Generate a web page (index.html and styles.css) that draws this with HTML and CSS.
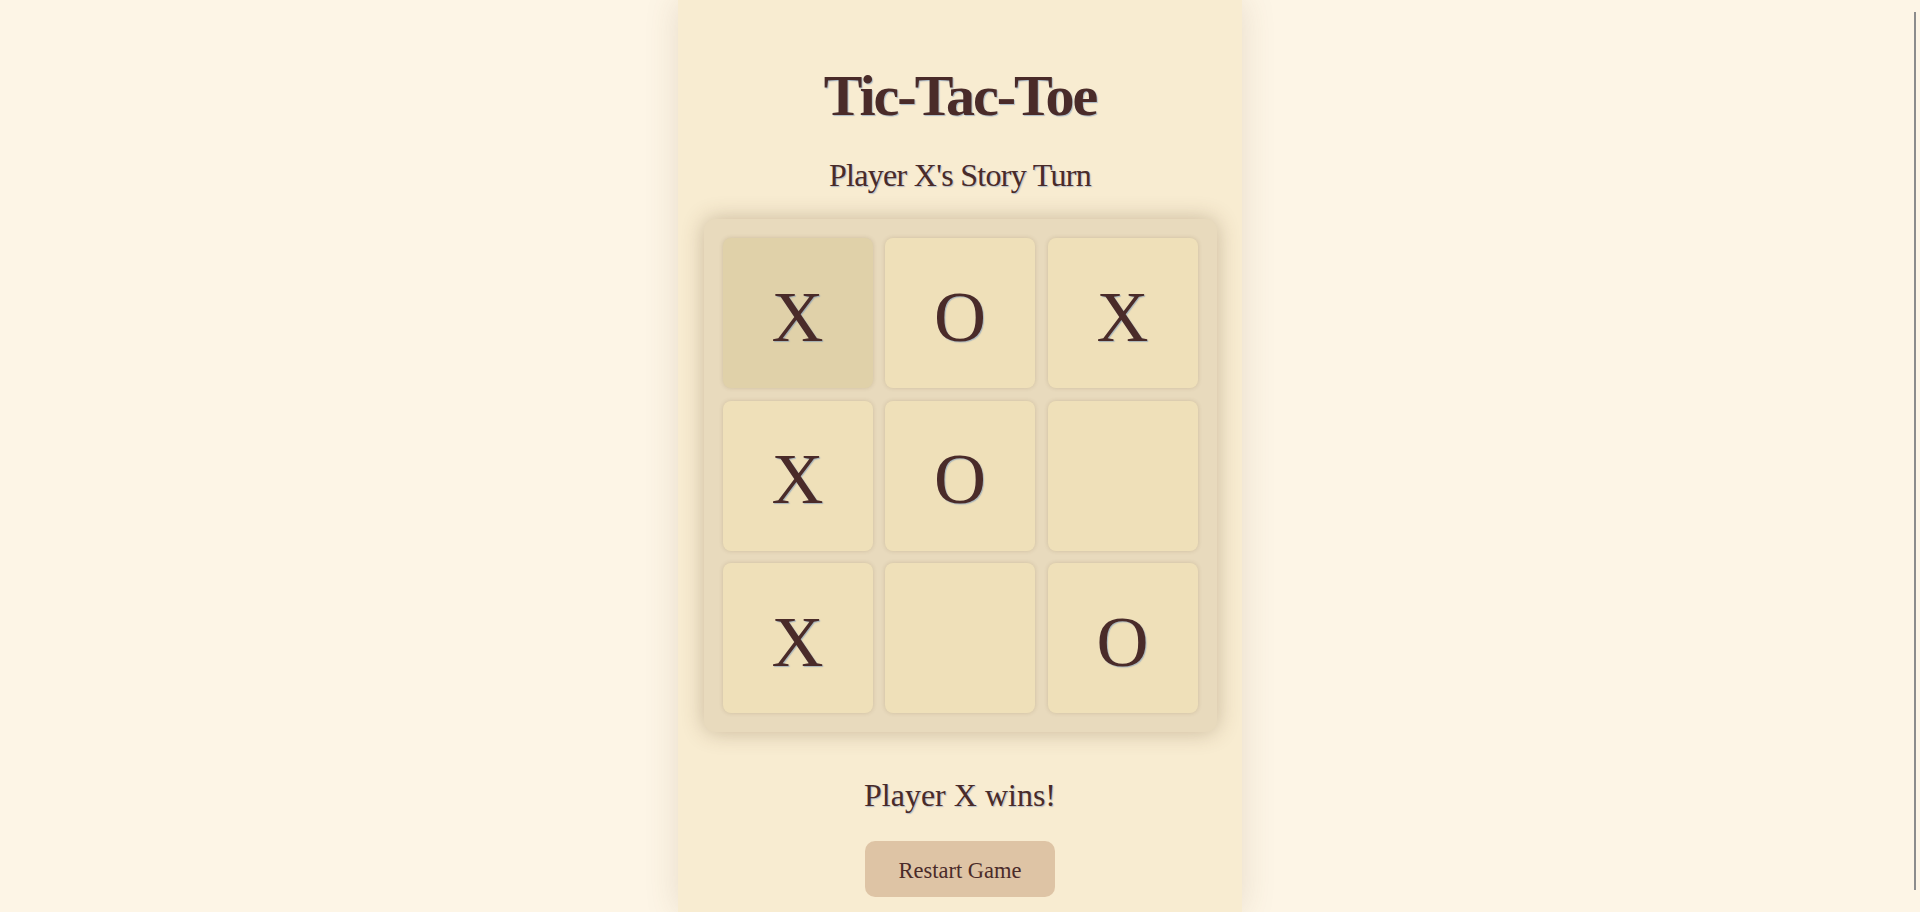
FILE: index.html
```html
<!DOCTYPE html>
<html lang="en">
<head>
<meta charset="utf-8">
<title>Tic-Tac-Toe</title>
<link rel="stylesheet" href="styles.css">
</head>
<body>
<main class="app">
  <h1 class="title">Tic-Tac-Toe</h1>
  <p class="turn">Player X's Story Turn</p>
  <div class="board">
    <div class="cell cell-active">X</div>
    <div class="cell">O</div>
    <div class="cell">X</div>
    <div class="cell">X</div>
    <div class="cell">O</div>
    <div class="cell"></div>
    <div class="cell">X</div>
    <div class="cell"></div>
    <div class="cell">O</div>
  </div>
  <p class="result">Player X wins!</p>
  <button class="restart">Restart Game</button>
</main>
<div class="scroll-thumb"></div>
</body>
</html>
```
FILE: styles.css
```css
html, body {
  margin: 0;
  height: 100%;
}

body {
  background: #fdf5e6;
  font-family: "Liberation Serif", "Times New Roman", serif;
  color: #4a2b29;
  display: flex;
  justify-content: center;
}

.app {
  width: 564px;
  min-height: 100%;
  box-sizing: border-box;
  padding-top: 61px;
  background: #f8ecd1;
  box-shadow: 0 0 32px rgba(110, 80, 40, 0.15);
  display: flex;
  flex-direction: column;
  align-items: center;
}

.title {
  margin: 0;
  font-size: 58px;
  line-height: 70px;
  font-weight: 700;
  letter-spacing: -2px;
  text-shadow: 1px 1px 1px rgba(110, 145, 190, 0.55);
}

.turn {
  margin: 25px 0 0;
  font-size: 32px;
  line-height: 38px;
  letter-spacing: -0.7px;
  text-shadow: 1px 1px 1px rgba(110, 145, 190, 0.5);
}

.board {
  margin-top: 25px;
  padding: 19px;
  display: grid;
  grid-template-columns: repeat(3, 150px);
  grid-template-rows: repeat(3, 150px);
  gap: 12.5px;
  background: #e8dabd;
  border-radius: 12px;
  box-shadow: 0 0 22px rgba(90, 60, 25, 0.3);
}

.cell {
  box-sizing: border-box;
  padding-top: 7px;
  display: flex;
  align-items: center;
  justify-content: center;
  font-size: 72px;
  line-height: 1;
  background: #efe0b9;
  border-radius: 8px;
  box-shadow: 0 0 4px rgba(90, 60, 25, 0.18);
  text-shadow: 1px 1px 1px rgba(110, 145, 190, 0.55);
}

.cell-active {
  background: #e0d1a9;
}

.result {
  margin: 44px 0 0;
  font-size: 32px;
  line-height: 38px;
  text-shadow: 1px 1px 1px rgba(110, 145, 190, 0.5);
}

.restart {
  margin-top: 27px;
  height: 56px;
  padding: 3px 33px 0;
  border: none;
  border-radius: 10px;
  background: #dec4a5;
  color: #4a2b29;
  font-family: "Liberation Serif", "Times New Roman", serif;
  font-size: 22.5px;
  line-height: 26px;
}

.scroll-thumb {
  position: fixed;
  top: 12px;
  bottom: 22px;
  right: 4px;
  width: 2px;
  background: #8c8c8c;
}
```
